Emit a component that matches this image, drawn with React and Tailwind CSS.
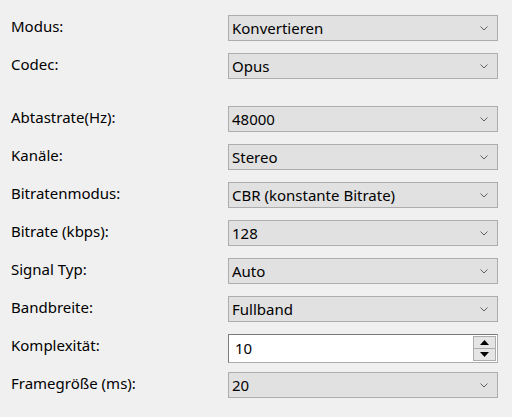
import React from "react";

const rows = [
  { label: "Modus:", value: "Konvertieren" },
  { label: "Codec:", value: "Opus", gapAfter: true },
  { label: "Abtastrate(Hz):", value: "48000" },
  { label: "Kanäle:", value: "Stereo" },
  { label: "Bitratenmodus:", value: "CBR (konstante Bitrate)" },
  { label: "Bitrate (kbps):", value: "128" },
  { label: "Signal Typ:", value: "Auto" },
  { label: "Bandbreite:", value: "Fullband" },
  { label: "Komplexität:", value: "10", spin: true },
  { label: "Framegröße (ms):", value: "20" },
];

function Chevron() {
  return (
    <svg width="8" height="5" viewBox="0 0 8 5" className="shrink-0">
      <path d="M0.5 0.5 L4 4 L7.5 0.5" fill="none" stroke="#606060" strokeWidth="1" />
    </svg>
  );
}

function Combo({ value }) {
  return (
    <div className="w-[270px] h-[26px] flex items-center justify-between bg-[#e1e1e1] border border-[#adadad] pl-[3px] pr-[9px]">
      <span>{value}</span>
      <Chevron />
    </div>
  );
}

function SpinBox({ value }) {
  return (
    <div className="w-[270px] h-[29px] flex items-stretch bg-white border border-[#7a7a7a] border-r-[#adadad] border-b-[#adadad]">
      <span className="flex-1 flex items-center pl-[6px]">{value}</span>
      <div className="w-[24px] flex flex-col py-[1px] pr-[1px]">
        <button className="flex-1 flex items-center justify-center bg-[#e5e5e5] border border-[#adadad]">
          <svg width="9" height="5" viewBox="0 0 9 5"><path d="M0 5 L4.5 0 L9 5 Z" fill="#000" /></svg>
        </button>
        <button className="flex-1 flex items-center justify-center bg-[#e5e5e5] border border-[#adadad] border-t-0">
          <svg width="9" height="5" viewBox="0 0 9 5"><path d="M0 0 L4.5 5 L9 0 Z" fill="#000" /></svg>
        </button>
      </div>
    </div>
  );
}

export default function App() {
  return (
    <div
      className="w-[512px] h-[417px] bg-[#f0f0f0] text-black text-[15px] pt-[15px] pl-[11px]"
      style={{ fontFamily: '"Segoe UI", "Noto Sans", sans-serif' }}
    >
      {rows.map((row) => (
        <div key={row.label} className={"flex h-[38px] " + (row.gapAfter ? "mb-[15px]" : "")}>
          <div className="w-[217px] leading-[20px] pt-[1px]">{row.label}</div>
          {row.spin ? <SpinBox value={row.value} /> : <Combo value={row.value} />}
        </div>
      ))}
    </div>
  );
}
